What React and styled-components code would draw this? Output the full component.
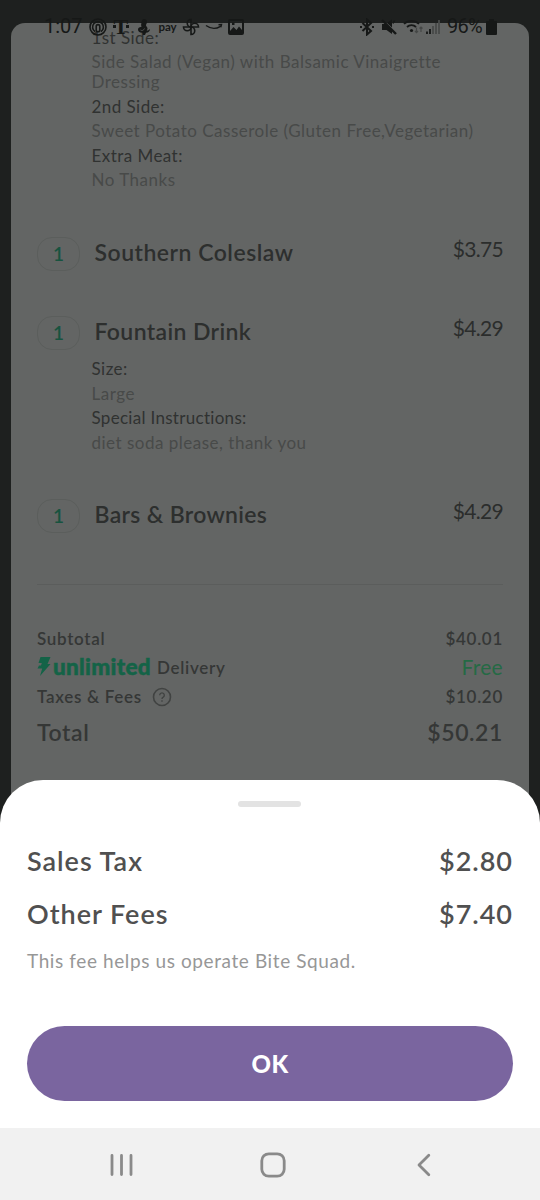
import React from "react";
import styled, { createGlobalStyle } from "styled-components";

const Global = createGlobalStyle`
  * { box-sizing: border-box; }
  body { margin: 0; background: #1e201f; }
  p, dl, dt, dd { margin: 0; font-weight: inherit; }
`;

const Screen = styled.div`
  position: relative;
  display: flex;
  flex-direction: column;
  width: 540px;
  height: 1200px;
  overflow: hidden;
  background: #1e201f;
  font-family: Lato, "Liberation Sans", sans-serif;
`;

const StatusBar = styled.header`
  position: absolute;
  inset: 12px 43px auto 44px;
  height: 29px;
  display: flex;
  justify-content: space-between;
  color: #161817;
  z-index: 1;
`;

const StatusGroup = styled.div`
  display: flex;
  align-items: center;
`;

const StatusText = styled.span`
  margin-left: ${(p) => p.$left || 0}px;
  font: 400 20px/29px Roboto, sans-serif;
  letter-spacing: ${(p) => p.$track || 0}px;
`;

const StatusIcon = styled.svg`
  flex: none;
  display: block;
  margin-left: ${(p) => p.$left || 0}px;
  fill: none;
  stroke: currentColor;
  stroke-width: 1.6;
`;

const PayMark = styled.span`
  width: 19px;
  margin-left: 8px;
  font: 700 11.5px/14px Lato, sans-serif;
  letter-spacing: -0.2px;
`;

const CarrierMark = styled.span`
  display: flex;
  align-items: center;
  width: 17px;
  height: 20px;
  margin-left: 6px;
  font: 700 22px/20px "Liberation Serif", serif;

  &::before,
  &::after {
    content: "";
    flex: none;
    width: 3px;
    height: 3px;
    background: currentColor;
  }

  &::before { margin-right: -2px; }
  &::after { margin-left: -2px; }
`;

const Card = styled.main`
  flex: none;
  height: 820px;
  margin: 23px 11px 0;
  padding: 4.5px 26px 0;
  border-radius: 14px 14px 0 0;
  background: #636564;
`;

const Details = styled.dl`
  display: flex;
  flex-direction: column;
  gap: 4.5px;
  margin: ${(p) => p.$top || 0}px 0 0 54.5px;
  padding-bottom: ${(p) => p.$bottom}px;
  font-size: 17px;
  line-height: 20px;
`;

const Label = styled.dt`
  color: #303231;
  letter-spacing: ${(p) => p.$track ?? 0.45}px;
`;

const Value = styled.dd`
  color: #484a49;
  letter-spacing: 0.5px;
`;

const Item = styled.div`
  display: flex;
  align-items: flex-start;
  height: 34px;
  margin-top: 45px;
`;

const Quantity = styled.span`
  width: 43px;
  height: 34px;
  border: 1px solid #5b5e5c;
  border-radius: 15px;
  color: #17533f;
  font-size: 19px;
  font-weight: 600;
  line-height: 32px;
  text-align: center;
`;

const ItemName = styled.span`
  margin-left: 14.5px;
  color: #2d2f2e;
  font-size: 23px;
  font-weight: 600;
  line-height: 30px;
  letter-spacing: ${(p) => p.$track || 0}px;
`;

const ItemPrice = styled.span`
  margin-left: auto;
  color: #2b2d2c;
  font-size: 21px;
  line-height: 23px;
  letter-spacing: -0.7px;
`;

const Divider = styled.hr`
  height: 1px;
  margin: 51px 0 39px;
  border: 0;
  background: #5b5d5c;
`;

const SummaryRow = styled.div`
  display: flex;
  align-items: center;
  justify-content: space-between;
  height: 29px;
  color: #353736;
  font-size: 17px;
  font-weight: 600;
  letter-spacing: 0.7px;
`;

const TotalRow = styled(SummaryRow)`
  height: 42px;
  font-size: 23px;
  letter-spacing: 0.6px;
`;

const SummaryLabel = styled.span`
  display: flex;
  align-items: center;
`;

const Free = styled.span`
  padding-bottom: 2px;
  color: #256a45;
  font-size: 21px;
  font-weight: 400;
  letter-spacing: 0.3px;
`;

const Unlimited = styled.span`
  display: flex;
  align-items: center;
  gap: 2px;
  margin: 0 6px 3px 0;
  color: #146347;
  font-size: 22.5px;
  font-weight: 900;
  letter-spacing: 0.3px;
  -webkit-text-stroke: 0.5px #146347;
`;

const HelpIcon = styled.svg`
  margin-left: 10px;
  fill: none;
  stroke: #414342;
`;

const Sheet = styled.section`
  position: absolute;
  inset: 780px 0 72px;
  display: flex;
  flex-direction: column;
  padding: 21px 27px 27px;
  border-radius: 43px 43px 0 0;
  background: #fff;
  z-index: 2;
`;

const Handle = styled.div`
  align-self: center;
  width: 63px;
  height: 6px;
  margin: 0 1px 27px 0;
  border-radius: 3px;
  background: #e3e3e3;
`;

const FeeRow = styled.div`
  display: flex;
  justify-content: space-between;
  height: 53px;
  color: #505050;
  font-size: 27px;
  font-weight: 600;
  line-height: 53px;
  letter-spacing: 0.98px;
`;

const Note = styled.p`
  color: #979797;
  font-size: 19px;
  line-height: 42px;
  letter-spacing: 0.6px;
`;

const OkButton = styled.button`
  height: 75px;
  margin-top: auto;
  padding: 0;
  border: 0;
  border-radius: 38px;
  background: #7a659f;
  color: #fff;
  font: 900 24px/75px Lato, sans-serif;
  letter-spacing: 0.4px;
`;

const NavBar = styled.nav`
  position: absolute;
  inset: 1128px 0 0;
  display: flex;
  align-items: center;
  padding: 2px 109px 0 110px;
  background: #f1f1f1;
`;

const NavIcon = styled.svg`
  display: block;
  margin-left: ${(p) => p.$left || 0}px;
  fill: none;
  stroke: #8a8a8a;
  stroke-width: 2.8;
  stroke-linecap: round;
  stroke-linejoin: round;
`;

const petals = [0, 90, 180, 270];

export default function App() {
  return (
    <Screen>
      <Global />
      <StatusBar>
        <StatusGroup>
          <StatusText>1:07</StatusText>
          <StatusIcon $left={6} width="18" height="18" viewBox="0 0 18 18">
            <circle cx="9" cy="9" r="8" />
            <path d="M6 13.6A5.4 5.4 0 1 1 12 13.6M7.2 12V8.4a1.8 1.8 0 0 1 3.6 0V12a1.8 1.8 0 0 1-3.6 0" />
          </StatusIcon>
          <CarrierMark>T</CarrierMark>
          <StatusIcon $left={7} width="14" height="18" viewBox="0 0 14 18">
            <path fill="currentColor" stroke="none" d="M7 1c2 0 3 1.200 3 3 0 1.500-1 2-1 3.200 0 1.300 1.500 1.500 1.500 3.300 0 .8-.3 1.500-.8 2 1.500.2 2.300-.5 3.300-1.500-.2 2.500-1.700 3.800-4 3.800L8 17H6l-.5-2.200C2.500 15 1 13.500 1 11.500c0-1.800 1.500-2.800 3.500-2.500C4 7.500 4 6 4.500 5H3l1.800-1.500C5 2 5.700 1 7 1Z" />
            <path stroke="#505251" strokeWidth="1" d="M3.500 12c1.500 1 3 .5 4-1.500" />
          </StatusIcon>
          <PayMark>pay</PayMark>
          <StatusIcon $left={4} width="18" height="18" viewBox="0 0 18 18">
            {petals.map((a) => (
              <path key={a} transform={`rotate(${a} 9 9)`} d="M9 9V1.500a3.700 3.700 0 0 0 0 7.500Z" />
            ))}
          </StatusIcon>
          <StatusIcon $left={5} width="18" height="18" viewBox="0 0 18 18">
            <path strokeWidth="1.4" d="M1 7.500c5 3.600 10 3.600 14.500.8M13.500 6.800l3-.2-.7 2.700" />
          </StatusIcon>
          <StatusIcon $left={5} width="16" height="16" viewBox="0 0 16 16">
            <path fill="currentColor" stroke="none" fillRule="evenodd" d="M2 0h12a2 2 0 0 1 2 2v12a2 2 0 0 1-2 2H2a2 2 0 0 1-2-2V2a2 2 0 0 1 2-2Zm0 2v10l3.500-4 3 3L11 7.500l3 3.500V2ZM4 3.500h2.500V6H4Z" />
          </StatusIcon>
        </StatusGroup>
        <StatusGroup>
          <StatusIcon width="16" height="18" viewBox="0 0 16 18">
            <path strokeWidth="2" d="M3.500 5l8.500 8-4 3.500v-15L12 5l-8.500 8" />
            <path strokeWidth="2" d="M1 9h2M13 9h2" />
          </StatusIcon>
          <StatusIcon $left={6} width="16" height="16" viewBox="0 0 16 16">
            <path fill="currentColor" stroke="none" d="M1 5h3.500L11 11.500V15L5.500 11H1ZM6 4l5-3.500v8Z" />
            <path strokeWidth="2.400" d="M1 1l14 14" />
            <path strokeWidth="1.500" d="M13.500 1.500l-1.500 3" />
          </StatusIcon>
          <StatusIcon $left={6} width="21" height="18" viewBox="0 0 21 18">
            <path strokeWidth="1.800" d="M1 5.800a11 11 0 0 1 15 0M4 9a6.500 6.500 0 0 1 9 0" />
            <circle cx="8.500" cy="12.500" r="1.600" fill="currentColor" stroke="none" />
            <path stroke="#454746" strokeWidth="1.200" d="M13.500 9.500v5M12 13l1.500 1.700L15 13M18 14v-5M16.500 10.500L18 9l1.500 1.500" />
          </StatusIcon>
          <StatusIcon $left={2} width="14" height="16" viewBox="0 0 14 16">
            <path strokeWidth="1.800" d="M1 12.500V15M4 10v5" />
            <path stroke="#484a49" strokeWidth="1.800" d="M7 7v8M10 4v11M13 1v14" />
          </StatusIcon>
          <StatusText $track={-0.7} $left={6.5}>96%</StatusText>
          <StatusIcon $left={4} width="11" height="16" viewBox="0 0 11 16">
            <path fill="currentColor" stroke="none" d="M3 0h5v2h2a1 1 0 0 1 1 1v12a1 1 0 0 1-1 1H1a1 1 0 0 1-1-1V3a1 1 0 0 1 1-1h2Z" />
          </StatusIcon>
        </StatusGroup>
      </StatusBar>
      <Card>
        <Details $bottom={2}>
          <Label>1st Side:</Label>
          <Value>Side Salad (Vegan) with Balsamic Vinaigrette<br />Dressing</Value>
          <Label>2nd Side:</Label>
          <Value>Sweet Potato Casserole (Gluten Free,Vegetarian)</Value>
          <Label>Extra Meat:</Label>
          <Value>No Thanks</Value>
        </Details>
        <Item>
          <Quantity>1</Quantity>
          <ItemName $track={0.5}>Southern Coleslaw</ItemName>
          <ItemPrice>$3.75</ItemPrice>
        </Item>
        <Item>
          <Quantity>1</Quantity>
          <ItemName $track={0.37}>Fountain Drink</ItemName>
          <ItemPrice>$4.29</ItemPrice>
        </Item>
        <Details $top={9} $bottom={1.5}>
          <Label>Size:</Label>
          <Value>Large</Value>
          <Label $track={0.3}>Special Instructions:</Label>
          <Value>diet soda please, thank you</Value>
        </Details>
        <Item>
          <Quantity>1</Quantity>
          <ItemName $track={0.33}>Bars &amp; Brownies</ItemName>
          <ItemPrice>$4.29</ItemPrice>
        </Item>
        <Divider />
        <SummaryRow>
          <SummaryLabel>Subtotal</SummaryLabel>
          <span>$40.01</span>
        </SummaryRow>
        <SummaryRow>
          <SummaryLabel>
            <Unlimited>
              <svg width="14" height="20" viewBox="0 0 14 20" fill="currentColor">
                <path d="M3.500 1h10L10.500 8h3L3 20l2.200-7.500H.5L2 9.500h2L4.800 7H1.500Z" />
              </svg>
              unlimited
            </Unlimited>
            Delivery
          </SummaryLabel>
          <Free>Free</Free>
        </SummaryRow>
        <SummaryRow>
          <SummaryLabel>
            Taxes &amp; Fees
            <HelpIcon width="20" height="20" viewBox="0 0 20 20">
              <circle cx="10" cy="10" r="8.500" strokeWidth="1.600" />
              <path strokeWidth="1.400" d="M7.700 8.200a2.300 2.300 0 1 1 3.500 2c-.9.500-1.200.8-1.200 1.700M10 13.200v1.500" />
            </HelpIcon>
          </SummaryLabel>
          <span>$10.20</span>
        </SummaryRow>
        <TotalRow>
          <SummaryLabel>Total</SummaryLabel>
          <span>$50.21</span>
        </TotalRow>
      </Card>
      <Sheet>
        <Handle />
        <FeeRow><span>Sales Tax</span><span>$2.80</span></FeeRow>
        <FeeRow><span>Other Fees</span><span>$7.40</span></FeeRow>
        <Note>This fee helps us operate Bite Squad.</Note>
        <OkButton>OK</OkButton>
      </Sheet>
      <NavBar>
        <NavIcon width="23" height="24" viewBox="0 0 23 24">
          <path d="M2 2.500v19M11.500 2.500v19M21 2.500v19" />
        </NavIcon>
        <NavIcon $left={126.5} width="26" height="26" viewBox="0 0 26 26">
          <rect x="1.800" y="1.800" width="22.400" height="22.400" rx="7" />
        </NavIcon>
        <NavIcon $left={130.5} width="15" height="24" viewBox="0 0 15 24">
          <path d="M12.800 2.200L3 12l9.800 9.800" />
        </NavIcon>
      </NavBar>
    </Screen>
  );
}
